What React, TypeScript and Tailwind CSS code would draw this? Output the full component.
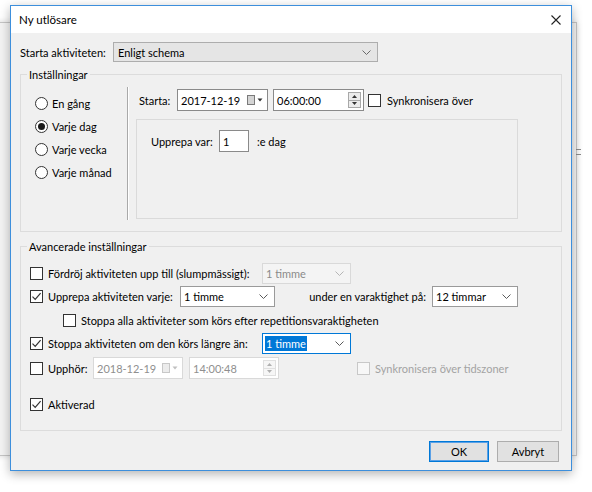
import React from "react";

const Chevron = ({ color = "#5a5a5a" }: { color?: string }) => (
  <svg width="9" height="5" viewBox="0 0 9 5" fill="none">
    <path d="M0.5 0.5 L4.5 4.5 L8.5 0.5" stroke={color} strokeWidth="1" />
  </svg>
);

const CheckMark = ({ color }: { color: string }) => (
  <svg width="11" height="11" viewBox="0 0 11 11" fill="none">
    <path d="M1.5 5.6 L4.2 8.3 L9.6 2.2" stroke={color} strokeWidth="1.2" />
  </svg>
);

function Checkbox({ checked = false, disabled = false }: { checked?: boolean; disabled?: boolean }) {
  return (
    <span
      className={
        disabled
          ? "flex h-[13px] w-[13px] shrink-0 items-center justify-center border border-[#c8c8c8] bg-[#f7f7f7]"
          : "flex h-[13px] w-[13px] shrink-0 items-center justify-center border border-[#333333] bg-white"
      }
    >
      {checked && <CheckMark color="#333333" />}
    </span>
  );
}

function Radio({ checked = false, label }: { checked?: boolean; label: string }) {
  return (
    <div className="flex h-[23px] items-center gap-[4px]">
      <span className="flex h-[13px] w-[13px] shrink-0 items-center justify-center rounded-full border border-[#333333] bg-white">
        {checked && <span className="h-[7px] w-[7px] rounded-full bg-[#1a1a1a]" />}
      </span>
      <span>{label}</span>
    </div>
  );
}

function Combo({
  text,
  className,
  disabled = false,
  focused = false,
}: {
  text: string;
  className: string;
  disabled?: boolean;
  focused?: boolean;
}) {
  const base = "flex h-[21px] shrink-0 items-center justify-between border pl-[2px] pr-[6px] ";
  const look = disabled
    ? "border-[#d9d9d9] bg-[#f4f4f4] text-[#8a8a8a]"
    : focused
      ? "border-[#0078d7] bg-white text-black"
      : "border-[#9a9a9a] bg-white text-black";
  return (
    <div className={base + look + " " + className}>
      {focused ? (
        <span className="bg-[#0078d7] pl-[1px] pr-[1px] leading-[15px] text-white">{text}</span>
      ) : (
        <span className="pl-[1px]">{text}</span>
      )}
      <Chevron color={disabled ? "#b5b5b5" : "#5a5a5a"} />
    </div>
  );
}

function DatePicker({ text, disabled = false }: { text: string; disabled?: boolean }) {
  return (
    <div
      className={
        disabled
          ? "flex h-[22px] w-[90px] shrink-0 items-center justify-between border border-[#d9d9d9] bg-white pl-[3px] pr-[4px] text-[#8f8f8f]"
          : "flex h-[22px] w-[91px] shrink-0 items-center justify-between border border-[#8a8a8a] bg-white pl-[3px] pr-[4px] text-black"
      }
    >
      <span>{text}</span>
      <svg width="16" height="10" viewBox="0 0 16 10">
        <rect
          x="0.5"
          y="0.5"
          width="7"
          height="9"
          fill={disabled ? "#ececec" : "#d4d4d4"}
          stroke={disabled ? "#c8c8c8" : "#7a7a7a"}
        />
        <path d="M10.5 3.5 L15.5 3.5 L13 6.5 Z" fill={disabled ? "#c0c0c0" : "#333333"} />
      </svg>
    </div>
  );
}

function TimePicker({ text, disabled = false }: { text: string; disabled?: boolean }) {
  return (
    <div
      className={
        disabled
          ? "flex h-[22px] w-[90px] shrink-0 items-center justify-between border border-[#d9d9d9] bg-white pl-[3px] pr-[2px] text-[#8f8f8f]"
          : "flex h-[22px] w-[91px] shrink-0 items-center justify-between border border-[#8a8a8a] bg-white pl-[3px] pr-[2px] text-black"
      }
    >
      <span>{text}</span>
      <div
        className={
          disabled
            ? "flex h-[16px] w-[13px] flex-col border border-[#e0e0e0] bg-[#f6f6f6]"
            : "flex h-[16px] w-[13px] flex-col border border-[#a8a8a8] bg-[#ececec]"
        }
      >
        <div
          className={
            disabled
              ? "flex flex-1 items-center justify-center border-b border-[#e0e0e0]"
              : "flex flex-1 items-center justify-center border-b border-[#a8a8a8]"
          }
        >
          <svg width="5" height="3" viewBox="0 0 5 3">
            <path d="M0 3 L5 3 L2.5 0 Z" fill={disabled ? "#b0b0b0" : "#333333"} />
          </svg>
        </div>
        <div className="flex flex-1 items-center justify-center">
          <svg width="5" height="3" viewBox="0 0 5 3">
            <path d="M0 0 L5 0 L2.5 3 Z" fill={disabled ? "#b0b0b0" : "#333333"} />
          </svg>
        </div>
      </div>
    </div>
  );
}

export default function App() {
  return (
    <div className="relative h-[492px] w-[592px] overflow-hidden bg-white font-[Lato,sans-serif] text-[11px] leading-[15px] text-black">
      {/* window behind the dialog */}
      <div className="absolute left-[-6px] top-[22px] h-[434px] w-[583px] border border-[#c4c4c4] bg-[#f3f3f3] shadow-[0_0_6px_rgba(0,0,0,0.15)]" />
      <span className="absolute left-[576px] top-[149px] h-[1px] w-[5px] bg-[#8a8a8a]" />
      <span className="absolute left-[576px] top-[154px] h-[1px] w-[5px] bg-[#8a8a8a]" />

      {/* dialog */}
      <div className="absolute left-[10px] top-[5px] flex h-[466px] w-[562px] flex-col border border-[#3d8fdc] bg-[#f0f0f0] shadow-[0_3px_10px_rgba(0,0,0,0.3)]">
        {/* title bar */}
        <div className="flex h-[27px] shrink-0 items-center justify-between bg-white pl-[8px] pr-[10px]">
          <span className="text-[11.5px]">Ny utlösare</span>
          <svg width="10" height="10" viewBox="0 0 10 10">
            <path d="M0.5 0.5 L9.5 9.5 M9.5 0.5 L0.5 9.5" stroke="#222222" strokeWidth="1.1" />
          </svg>
        </div>

        {/* body */}
        <div className="flex flex-1 flex-col px-[9px] pt-[9px]">
          {/* Starta aktiviteten */}
          <div className="flex h-[20px] items-center">
            <span className="w-[93px] shrink-0">Starta aktiviteten:</span>
            <div className="flex h-[20px] w-[265px] items-center justify-between border border-[#adadad] bg-[#e5e5e5] pl-[4px] pr-[6px]">
              <span>Enligt schema</span>
              <Chevron color="#6a6a6a" />
            </div>
          </div>

          {/* Inställningar */}
          <div className="mt-[12px] border border-[#dcdcdc]">
            <div className="-mt-[8px] ml-[6px] w-fit bg-[#f0f0f0] px-[2px] leading-[15px]">Inställningar</div>
            <div className="flex pb-[11px]">
              <div className="w-[106px] shrink-0 pl-[14px] pt-[10px]">
                <Radio label="En gång" />
                <Radio label="Varje dag" checked />
                <Radio label="Varje vecka" />
                <Radio label="Varje månad" />
              </div>
              <div className="mt-[5px] h-[133px] w-[2px] shrink-0 border-l border-r border-l-[#a9a9a9] border-r-white" />
              <div className="flex flex-col pl-[7px] pt-[7px]">
                <div className="flex h-[22px] items-center">
                  <span className="w-[41px] shrink-0 pl-[3px]">Starta:</span>
                  <DatePicker text="2017-12-19" />
                  <div className="ml-[5px]">
                    <TimePicker text="06:00:00" />
                  </div>
                  <div className="ml-[4px]">
                    <Checkbox />
                  </div>
                  <span className="ml-[6px]">Synkronisera över</span>
                </div>
                <div className="mt-[8px] h-[100px] w-[382px] border border-[#dadada] pl-[14px] pt-[10px]">
                  <div className="flex h-[22px] items-center">
                    <span className="w-[68px] shrink-0">Upprepa var:</span>
                    <div className="flex h-[22px] w-[30px] items-center border border-[#8a8a8a] bg-white pl-[3px]">1</div>
                    <span className="ml-[8px]">:e dag</span>
                  </div>
                </div>
              </div>
            </div>
          </div>

          {/* Avancerade inställningar */}
          <div className="mt-[14px] border border-[#dcdcdc]">
            <div className="-mt-[8px] ml-[6px] w-fit bg-[#f0f0f0] px-[2px] leading-[15px]">Avancerade inställningar</div>
            <div className="flex flex-col pb-[15px] pl-[9px] pt-[8px]">
              <div className="flex h-[22px] items-center">
                <Checkbox />
                <span className="ml-[5px] w-[214px] shrink-0">Fördröj aktiviteten upp till (slumpmässigt):</span>
                <Combo text="1 timme" className="w-[89px]" disabled />
              </div>
              <div className="mt-[1px] flex h-[22px] items-center">
                <Checkbox checked />
                <span className="ml-[5px] w-[132px] shrink-0">Upprepa aktiviteten varje:</span>
                <Combo text="1 timme" className="w-[95px]" />
                <span className="w-[151px] shrink-0 text-right">under en varaktighet på:</span>
                <Combo text="12 timmar" className="ml-[6px] w-[86px]" />
              </div>
              <div className="mt-[2px] flex h-[22px] items-center pl-[33px]">
                <Checkbox />
                <span className="ml-[5px]">Stoppa alla aktiviteter som körs efter repetitionsvaraktigheten</span>
              </div>
              <div className="mt-[1px] flex h-[22px] items-center">
                <Checkbox checked />
                <span className="ml-[5px] w-[214px] shrink-0">Stoppa aktiviteten om den körs längre än:</span>
                <Combo text="1 timme" className="w-[89px]" focused />
              </div>
              <div className="mt-[3px] flex h-[22px] items-center">
                <Checkbox />
                <span className="ml-[5px] w-[45px] shrink-0">Upphör:</span>
                <DatePicker text="2018-12-19" disabled />
                <div className="ml-[6px]">
                  <TimePicker text="14:00:48" disabled />
                </div>
                <div className="ml-[78px]">
                  <Checkbox disabled />
                </div>
                <span className="ml-[5px] text-[#a3a3a3]">Synkronisera över tidszoner</span>
              </div>
              <div className="mt-[14px] flex h-[22px] items-center">
                <Checkbox checked />
                <span className="ml-[5px]">Aktiverad</span>
              </div>
            </div>
          </div>

          {/* buttons */}
          <div className="mt-[10px] flex justify-end gap-[8px] pr-[3px]">
            <button className="flex h-[21px] w-[60px] items-center justify-center border border-[#0078d7] bg-[#e1e1e1] shadow-[inset_0_0_0_1px_#5aa0e6]">
              OK
            </button>
            <button className="flex h-[21px] w-[62px] items-center justify-center border border-[#adadad] bg-[#e1e1e1]">
              Avbryt
            </button>
          </div>
        </div>
      </div>
    </div>
  );
}
